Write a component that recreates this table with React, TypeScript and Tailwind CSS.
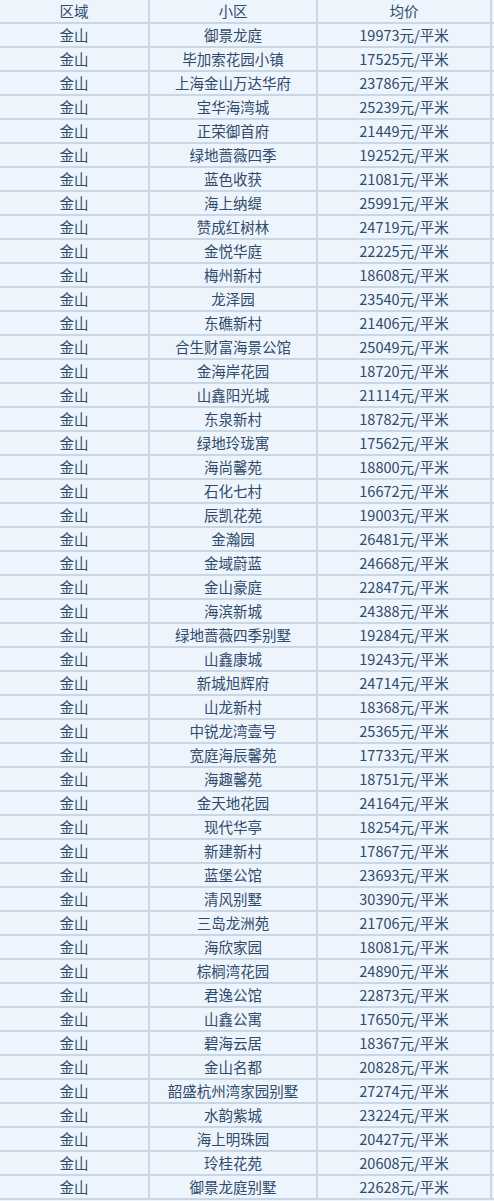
const rows: [string, number][] = [
  ['御景龙庭', 19973],
  ['毕加索花园小镇', 17525],
  ['上海金山万达华府', 23786],
  ['宝华海湾城', 25239],
  ['正荣御首府', 21449],
  ['绿地蔷薇四季', 19252],
  ['蓝色收获', 21081],
  ['海上纳缇', 25991],
  ['赞成红树林', 24719],
  ['金悦华庭', 22225],
  ['梅州新村', 18608],
  ['龙泽园', 23540],
  ['东礁新村', 21406],
  ['合生财富海景公馆', 25049],
  ['金海岸花园', 18720],
  ['山鑫阳光城', 21114],
  ['东泉新村', 18782],
  ['绿地玲珑寓', 17562],
  ['海尚馨苑', 18800],
  ['石化七村', 16672],
  ['辰凯花苑', 19003],
  ['金瀚园', 26481],
  ['金域蔚蓝', 24668],
  ['金山豪庭', 22847],
  ['海滨新城', 24388],
  ['绿地蔷薇四季别墅', 19284],
  ['山鑫康城', 19243],
  ['新城旭辉府', 24714],
  ['山龙新村', 18368],
  ['中锐龙湾壹号', 25365],
  ['宽庭海辰馨苑', 17733],
  ['海趣馨苑', 18751],
  ['金天地花园', 24164],
  ['现代华亭', 18254],
  ['新建新村', 17867],
  ['蓝堡公馆', 23693],
  ['清风别墅', 30390],
  ['三岛龙洲苑', 21706],
  ['海欣家园', 18081],
  ['棕榈湾花园', 24890],
  ['君逸公馆', 22873],
  ['山鑫公寓', 17650],
  ['碧海云居', 18367],
  ['金山名都', 20828],
  ['韶盛杭州湾家园别墅', 27274],
  ['水韵紫城', 23224],
  ['海上明珠园', 20427],
  ['玲桂花苑', 20608],
  ['御景龙庭别墅', 22628],
];

const Row = ({ a, b, c }: { a: string; b: string; c: string }) => (
  <div className="grid h-6 grid-cols-[150px_168px_174px] border-b-2 border-[#c8d6e6]">
    <div className="flex items-center justify-center border-r-2 border-[#c8d6e6]">{a}</div>
    <div className="flex items-center justify-center border-r-2 border-[#c8d6e6]">{b}</div>
    <div className="flex items-center justify-center border-r-2 border-[#c8d6e6]">{c}</div>
  </div>
);

export default function App() {
  return (
    <div
      className="h-[1201px] w-[494px] bg-[#eef4fc] text-[14.5px] leading-none text-[#2e4b6b]"
      style={{ fontFamily: '"Noto Sans CJK SC", "Noto Sans", sans-serif' }}
    >
      <Row a="区域" b="小区" c="均价" />
      {rows.map(([name, price]) => (
        <Row key={name} a="金山" b={name} c={`${price}元/平米`} />
      ))}
    </div>
  );
}
